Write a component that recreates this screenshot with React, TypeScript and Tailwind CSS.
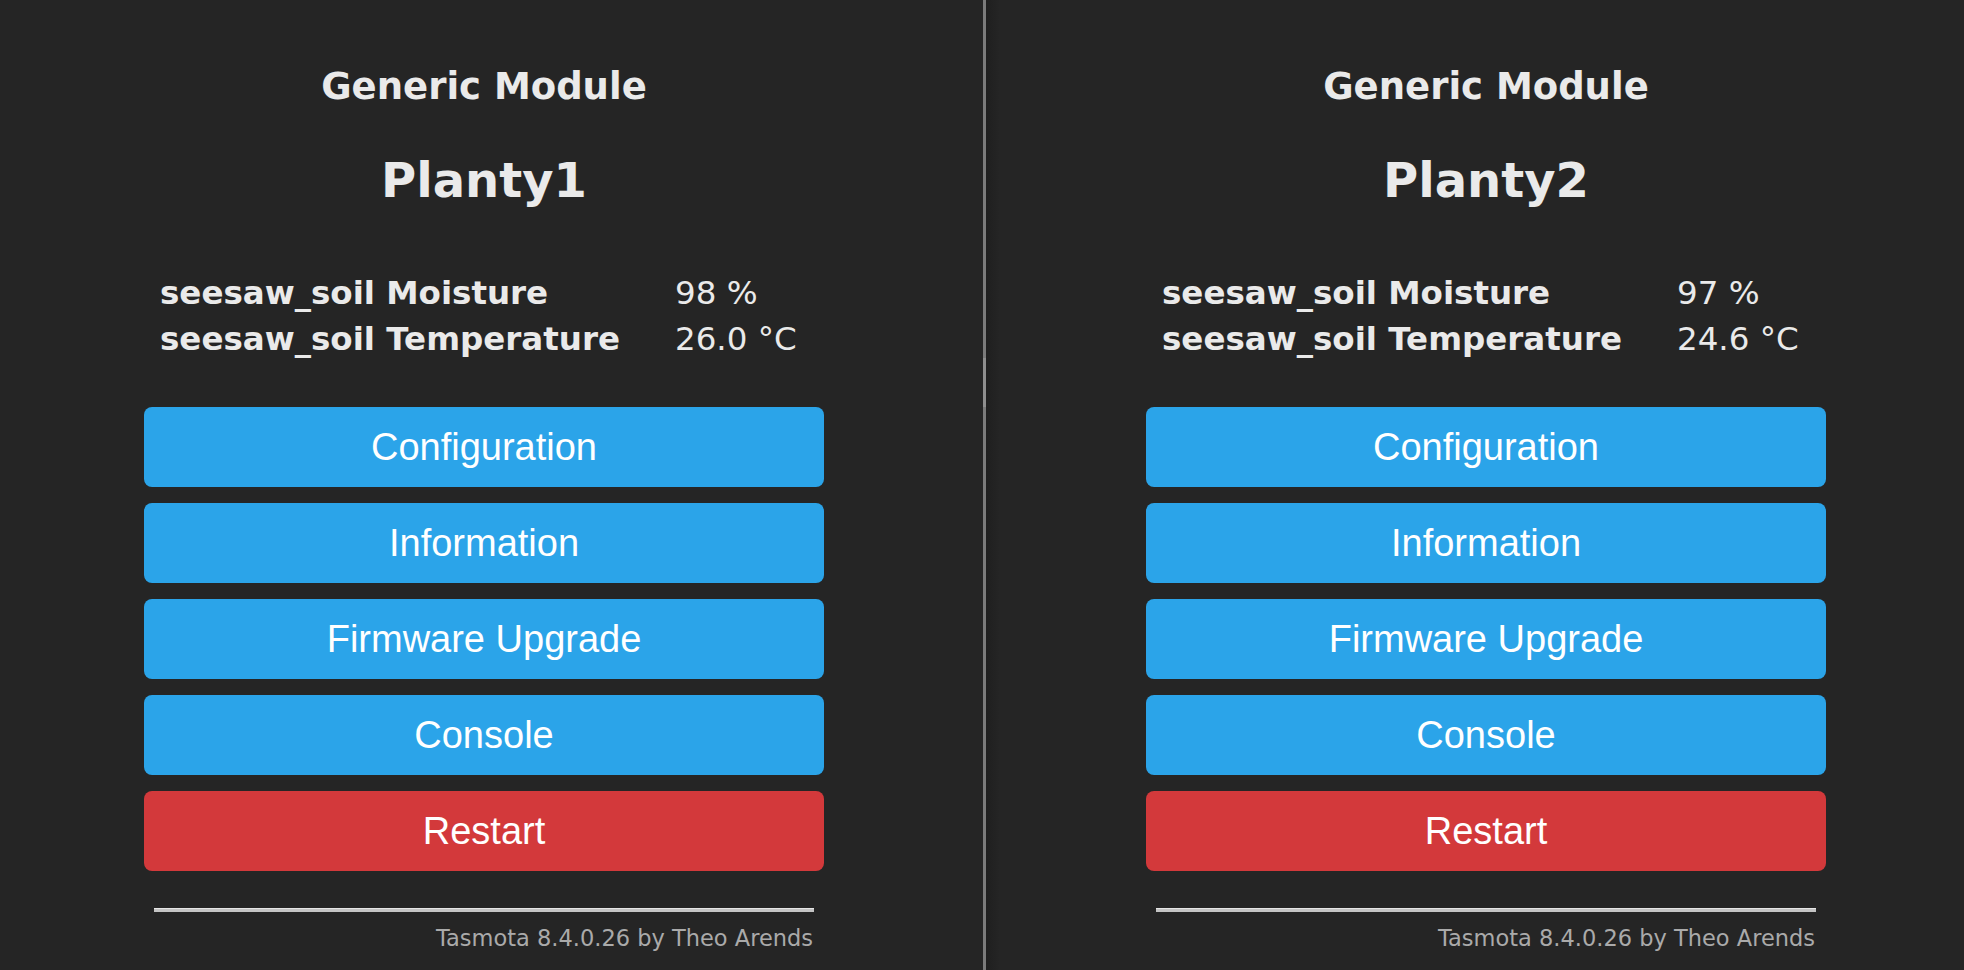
import React from 'react';

type Panel = {
  name: string;
  moisture: string;
  temperature: string;
};

const panels: Panel[] = [
  { name: 'Planty1', moisture: '98 %', temperature: '26.0 °C' },
  { name: 'Planty2', moisture: '97 %', temperature: '24.6 °C' },
];

const buttons = [
  { label: 'Configuration', red: false },
  { label: 'Information', red: false },
  { label: 'Firmware Upgrade', red: false },
  { label: 'Console', red: false },
  { label: 'Restart', red: true },
];

function DevicePage({ panel }: { panel: Panel }) {
  return (
    <div className="w-[680px] flex flex-col text-[#eaeaea] font-['DejaVu_Sans',Verdana,sans-serif]">
      <h3 className="mt-[68px] text-center text-[37px] leading-[37px] font-bold">Generic Module</h3>
      <h2 className="mt-[51px] text-center text-[48px] leading-[48px] font-bold">{panel.name}</h2>

      <div className="mt-[66px] pl-[16px] grid grid-cols-[515px_1fr] text-[32.5px] leading-[46px]">
        <div className="font-bold">seesaw_soil Moisture</div>
        <div>{panel.moisture}</div>
        <div className="font-bold">seesaw_soil Temperature</div>
        <div>{panel.temperature}</div>
      </div>

      <div className="mt-[45px] flex flex-col gap-[16px]">
        {buttons.map((b) => (
          <button
            key={b.label}
            className={
              (b.red ? 'bg-[#d3393b] ' : 'bg-[#2ba4e9] ') +
              "h-[80px] w-full rounded-[8px] flex items-center justify-center text-white text-[38px] font-['Liberation_Sans',Arial,sans-serif]"
            }
          >
            {b.label}
          </button>
        ))}
      </div>

      <div className="mt-[37px] mx-[10px] h-[4px] bg-[#c4c4c4] border-t border-[#e6e6e6]" />
      <div className="mt-[15px] mr-[11px] text-right text-[22.5px] leading-[22px] text-[#aaaaaa]">
        Tasmota 8.4.0.26 by Theo Arends
      </div>
    </div>
  );
}

export default function App() {
  return (
    <div className="w-[1964px] h-[970px] flex overflow-hidden bg-[#252525]">
      <div className="w-[983px] h-full pl-[144px]">
        <DevicePage panel={panels[0]} />
      </div>
      <div className="w-[3px] h-full flex flex-col bg-[#7b7b7b]">
        <div className="mt-[358px] h-[49px] bg-[#8e8e8e]" />
      </div>
      <div className="flex-1 h-full pl-[160px] bg-[linear-gradient(to_right,#1f1f1f,#252525_14px)]">
        <DevicePage panel={panels[1]} />
      </div>
    </div>
  );
}
